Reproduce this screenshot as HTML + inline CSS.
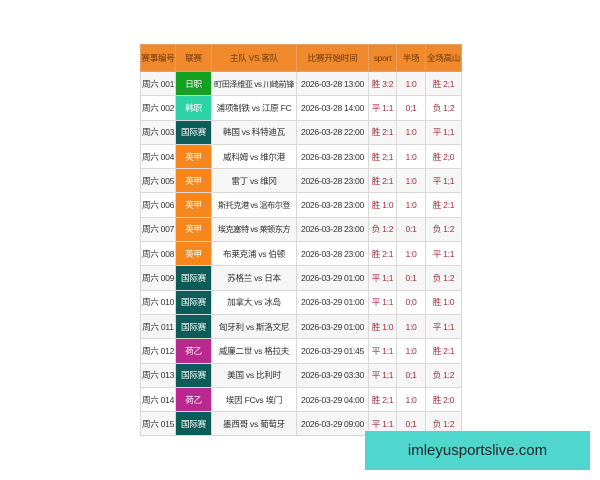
<!DOCTYPE html>
<html><head><meta charset="utf-8"><style>
body{margin:0;width:600px;height:480px;background:#fff;position:relative;overflow:hidden;font-family:"Liberation Sans","Noto Sans CJK SC",sans-serif;}
table{position:absolute;left:140px;top:44px;width:321px;border-collapse:collapse;table-layout:fixed;font-size:8.6px;color:#333;letter-spacing:-0.3px;}
td,th{border:1px solid #d8d8d8;text-align:center;padding:0;white-space:nowrap;overflow:hidden;}
th{background:#f0892c;color:#6a3a10;font-weight:normal;height:26px;border-color:#e8a060;}
tr.r td{height:23.3px;}
tr.r:nth-child(even) td{background:#f6f6f6;}
.L{color:#fff!important;}
.rj{background:#14a021!important}.kj{background:#2dd3a6!important}.gj{background:#0d5c57!important}.yj{background:#f7861d!important}.hy{background:#b8288f!important}
.res{color:#a23040;}
.sm{font-size:8.2px;letter-spacing:-0.5px;}
.ban{position:absolute;left:365px;top:431px;width:225px;height:39px;background:#4fd7cd;color:#222;font-size:15px;line-height:39px;text-align:center;}
</style></head><body>
<table>
<colgroup><col style="width:35px"><col style="width:36px"><col style="width:85px"><col style="width:72px"><col style="width:28px"><col style="width:29px"><col style="width:36px"></colgroup>
<tr><th>赛事编号</th><th>联赛</th><th>主队 VS 客队</th><th>比赛开始时间</th><th>sport</th><th>半场</th><th>全场高山</th></tr>
<tr class="r"><td>周六 001</td><td class="L rj">日职</td><td class="sm">町田泽维亚 vs 川崎前锋</td><td>2026-03-28 13:00</td><td class="res">胜 3:2</td><td class="res">1:0</td><td class="res">胜 2;1</td></tr>
<tr class="r"><td>周六 002</td><td class="L kj">韩职</td><td>浦项制铁 vs 江原 FC</td><td>2026-03-28 14:00</td><td class="res">平 1:1</td><td class="res">0;1</td><td class="res">负 1;2</td></tr>
<tr class="r"><td>周六 003</td><td class="L gj">国际赛</td><td>韩国 vs 科特迪瓦</td><td>2026-03-28 22:00</td><td class="res">胜 2:1</td><td class="res">1:0</td><td class="res">平 1;1</td></tr>
<tr class="r"><td>周六 004</td><td class="L yj">英甲</td><td>威科姆 vs 维尔港</td><td>2026-03-28 23:00</td><td class="res">胜 2;1</td><td class="res">1:0</td><td class="res">胜 2;0</td></tr>
<tr class="r"><td>周六 005</td><td class="L yj">英甲</td><td>雷丁 vs 维冈</td><td>2026-03-28 23:00</td><td class="res">胜 2:1</td><td class="res">1:0</td><td class="res">平 1;1</td></tr>
<tr class="r"><td>周六 006</td><td class="L yj">英甲</td><td class="sm">斯托克港 vs 温布尔登</td><td>2026-03-28 23:00</td><td class="res">胜 1:0</td><td class="res">1:0</td><td class="res">胜 2:1</td></tr>
<tr class="r"><td>周六 007</td><td class="L yj">英甲</td><td class="sm">埃克塞特 vs 莱顿东方</td><td>2026-03-28 23:00</td><td class="res">负 1:2</td><td class="res">0:1</td><td class="res">负 1:2</td></tr>
<tr class="r"><td>周六 008</td><td class="L yj">英甲</td><td>布莱克浦 vs 伯顿</td><td>2026-03-28 23:00</td><td class="res">胜 2:1</td><td class="res">1:0</td><td class="res">平 1:1</td></tr>
<tr class="r"><td>周六 009</td><td class="L gj">国际赛</td><td>苏格兰 vs 日本</td><td>2026-03-29 01:00</td><td class="res">平 1;1</td><td class="res">0:1</td><td class="res">负 1:2</td></tr>
<tr class="r"><td>周六 010</td><td class="L gj">国际赛</td><td>加拿大 vs 冰岛</td><td>2026-03-29 01:00</td><td class="res">平 1:1</td><td class="res">0;0</td><td class="res">胜 1:0</td></tr>
<tr class="r"><td>周六 011</td><td class="L gj">国际赛</td><td>匈牙利 vs 斯洛文尼</td><td>2026-03-29 01:00</td><td class="res">胜 1:0</td><td class="res">1:0</td><td class="res">平 1:1</td></tr>
<tr class="r"><td>周六 012</td><td class="L hy">荷乙</td><td>威廉二世 vs 格拉夫</td><td>2026-03-29 01:45</td><td class="res">平 1:1</td><td class="res">1:0</td><td class="res">胜 2:1</td></tr>
<tr class="r"><td>周六 013</td><td class="L gj">国际赛</td><td>美国 vs 比利时</td><td>2026-03-29 03:30</td><td class="res">平 1;1</td><td class="res">0;1</td><td class="res">负 1:2</td></tr>
<tr class="r"><td>周六 014</td><td class="L hy">荷乙</td><td>埃因 FCvs 埃门</td><td>2026-03-29 04:00</td><td class="res">胜 2;1</td><td class="res">1:0</td><td class="res">胜 2:0</td></tr>
<tr class="r"><td>周六 015</td><td class="L gj">国际赛</td><td>墨西哥 vs 葡萄牙</td><td>2026-03-29 09:00</td><td class="res">平 1:1</td><td class="res">0;1</td><td class="res">负 1:2</td></tr>
</table>
<div class="ban">imleyusportslive.com</div>
</body></html>
